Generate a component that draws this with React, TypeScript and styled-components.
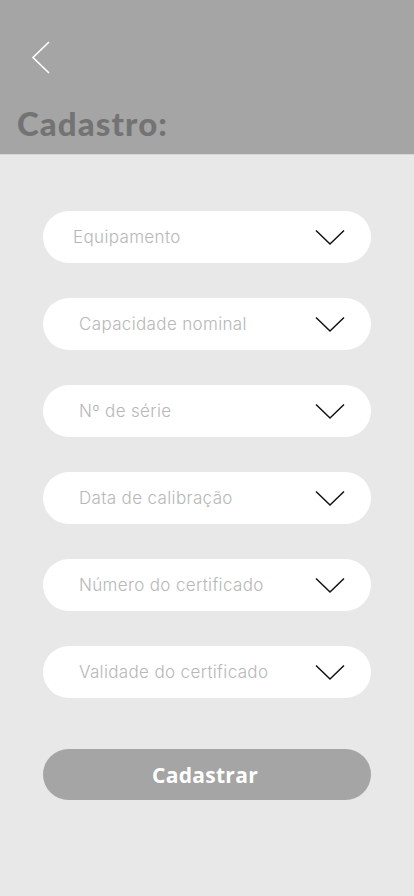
import React from "react";
import styled, { createGlobalStyle } from "styled-components";

const Global = createGlobalStyle`
  html, body { margin: 0; padding: 0; background: #e8e8e8; }
  body { font-family: "Montserrat", "Open Sans", "Liberation Sans", sans-serif; }
  * { box-sizing: border-box; }
`;

const Page = styled.div`
  width: 414px;
  min-height: 896px;
  background: #e8e8e8;
  display: flex;
  flex-direction: column;
`;

const Header = styled.header`
  height: 155px;
  background: #a5a5a5;
  border-bottom: 1px solid #d6d6d6;
  display: flex;
  flex-direction: column;
  padding: 41px 0 0 17px;
`;

const BackButton = styled.button`
  width: 40px;
  height: 34px;
  margin-left: 14px;
  padding: 0;
  border: none;
  background: transparent;
  display: flex;
  align-items: flex-start;
  cursor: pointer;
`;

const Title = styled.h1`
  margin: 28px 0 0 0;
  font-family: "Lato", "Liberation Sans", sans-serif;
  font-weight: 900;
  font-size: 33px;
  line-height: 40px;
  color: #737373;
  letter-spacing: 1.1px;
`;

const Form = styled.form`
  display: flex;
  flex-direction: column;
  gap: 35px;
  padding: 56px 43px 0 43px;
`;

const Field = styled.div<{ $indent: number }>`
  height: 52px;
  border-radius: 26px;
  background: #ffffff;
  display: flex;
  align-items: center;
  justify-content: space-between;
  padding: 0 26px 0 ${(p) => p.$indent}px;
`;

const Placeholder = styled.span`
  font-family: "Inter", "Open Sans", sans-serif;
  font-weight: 300;
  font-size: 17px;
  color: #b7b7b7;
  letter-spacing: 0.35px;
`;

const Chevron = styled.svg`
  width: 30px;
  height: 17px;
  flex-shrink: 0;
`;

const Submit = styled.button`
  margin-top: 16px;
  height: 51px;
  border-radius: 26px;
  border: none;
  background: #a5a5a5;
  color: #ffffff;
  font-family: "Open Sans", "Liberation Sans", sans-serif;
  font-weight: 700;
  font-size: 21px;
  letter-spacing: 0.3px;
  padding: 0 4px 0 0;
  cursor: pointer;
`;

const fields: { label: string; indent: number }[] = [
  { label: "Equipamento", indent: 30 },
  { label: "Capacidade nominal", indent: 36 },
  { label: "Nº de série", indent: 36 },
  { label: "Data de calibração", indent: 36 },
  { label: "Número do certificado", indent: 36 },
  { label: "Validade do certificado", indent: 36 },
];

export default function App() {
  return (
    <Page>
      <Global />
      <Header>
        <BackButton type="button" aria-label="Voltar">
          <svg width="20" height="34" viewBox="0 0 20 34">
            <polyline points="18,1 2,16.5 18,32" fill="none" stroke="#ffffff" strokeWidth="1.6" />
          </svg>
        </BackButton>
        <Title>Cadastro:</Title>
      </Header>
      <Form onSubmit={(e) => e.preventDefault()}>
        {fields.map((f) => (
          <Field key={f.label} $indent={f.indent}>
            <Placeholder>{f.label}</Placeholder>
            <Chevron viewBox="0 0 30 17">
              <polyline points="1,1.5 15,15 29,1.5" fill="none" stroke="#111111" strokeWidth="1.5" />
            </Chevron>
          </Field>
        ))}
        <Submit type="submit">Cadastrar</Submit>
      </Form>
    </Page>
  );
}
